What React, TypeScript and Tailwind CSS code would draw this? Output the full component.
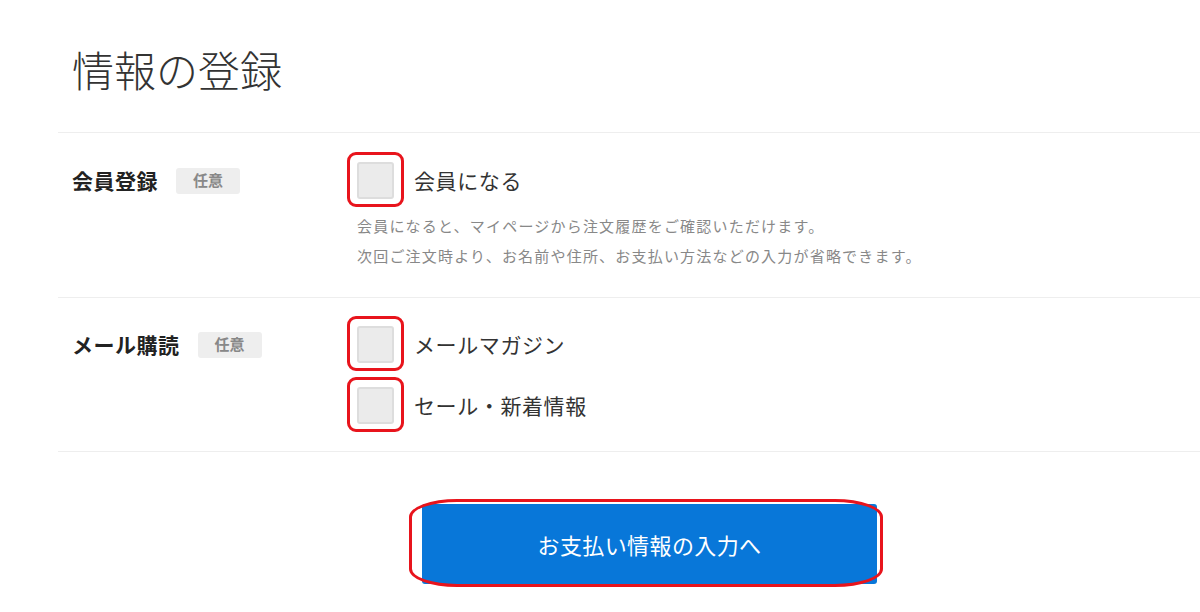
import type { ReactNode } from "react";

const RED = "border-[#e8141c]";

function Badge() {
  return (
    <span className="inline-flex h-[26px] w-[64px] items-center justify-center rounded-[3px] bg-[#eeeeee] text-[15px] font-bold text-[#888888]">
      任意
    </span>
  );
}

function Check({ label }: { label: string }) {
  return (
    <label className="flex items-center gap-[20px]">
      <span className="relative block size-[37px] shrink-0">
        <span className="block size-full rounded-[3px] border-2 border-[#dddddd] bg-[#ebebeb]" />
        {/* annotation frame */}
        <span
          className={`pointer-events-none absolute -left-[10px] -top-[10px] h-[55px] w-[57px] rounded-[9px] border-[3px] ${RED}`}
        />
      </span>
      <span className="text-[21px] leading-none tracking-[0.6px] text-[#333333]">{label}</span>
    </label>
  );
}

function Row({ title, top, bottom, children }: { title: string; top: string; bottom: string; children: ReactNode }) {
  return (
    <div className={`flex border-t border-[#eeeeee] pl-[14px] ${top} ${bottom}`}>
      <div className="flex h-[37px] w-[285px] shrink-0 items-center gap-[18px]">
        <span className="text-[21px] leading-none font-bold tracking-[0.5px] text-[#222222]">{title}</span>
        <Badge />
      </div>
      <div className="flex flex-col">{children}</div>
    </div>
  );
}

export default function App() {
  return (
    <div className="h-[612px] w-[1200px] overflow-hidden bg-white font-['Noto_Sans_CJK_JP',sans-serif]">
      <div className="ml-[58px] w-[1183px]">
        <h1 className="pl-[14px] pt-[48px] pb-[42px] text-[42px] font-light leading-none text-[#333333]">
          情報の登録
        </h1>

        <Row title="会員登録" top="pt-[29px]" bottom="pb-[26px]">
          <Check label="会員になる" />
          <div className="mt-[12px] text-[15px] leading-[30px] tracking-[1.2px] text-[#888888]">
            <p>会員になると、マイページから注文履歴をご確認いただけます。</p>
            <p>次回ご注文時より、お名前や住所、お支払い方法などの入力が省略できます。</p>
          </div>
        </Row>

        <Row title="メール購読" top="pt-[28px]" bottom="pb-[27px]">
          <div className="flex flex-col gap-[24px]">
            <Check label="メールマガジン" />
            <Check label="セール・新着情報" />
          </div>
        </Row>

        <div className="flex justify-center border-t border-[#eeeeee] pt-[52px]">
          <div className="relative">
            <button
              type="button"
              className="flex h-[80px] w-[455px] items-center justify-center rounded-[3px] bg-[#0877d9] text-[22px] tracking-[0.4px] text-white"
            >
              お支払い情報の入力へ
            </button>
            {/* annotation ellipse */}
            <span
              className={`pointer-events-none absolute -top-[5px] -bottom-[3px] -left-[13px] -right-[6px] rounded-[48px/18px] border-[3px] ${RED}`}
            />
          </div>
        </div>
      </div>
    </div>
  );
}
